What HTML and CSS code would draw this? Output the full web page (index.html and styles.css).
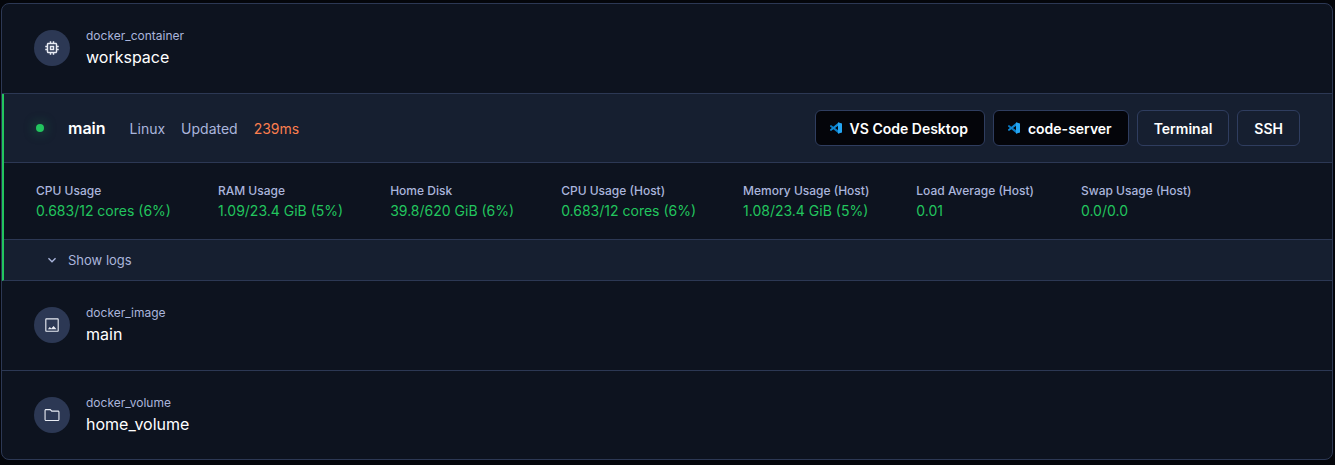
FILE: index.html
```html
<!DOCTYPE html>
<html lang="en">
<head>
<meta charset="UTF-8">
<meta name="viewport" content="width=device-width, initial-scale=1.0">
<title>Workspace resources</title>
<link rel="stylesheet" href="styles.css">
</head>
<body>
<main class="resources">
  <section class="resource">
    <div class="avatar">
      <svg width="18" height="18" viewBox="0 0 24 24" fill="currentColor"><path d="M15 9H9v6h6V9zm-2 4h-2v-2h2v2zm8-2V9h-2V7c0-1.100-.9-2-2-2h-2V3h-2v2h-2V3H9v2H7c-1.100 0-2 .9-2 2v2H3v2h2v2H3v2h2v2c0 1.100.9 2 2 2h2v2h2v-2h2v2h2v-2h2c1.100 0 2-.9 2-2v-2h2v-2h-2v-2h2zm-4 6H7V7h10v10z"/></svg>
    </div>
    <div>
      <div class="resource-type">docker_container</div>
      <div class="resource-name">workspace</div>
    </div>
  </section>

  <section class="agent">
    <header class="agent-header">
      <div class="agent-info">
        <span class="status"></span>
        <span class="agent-name">main</span>
        <span>Linux</span>
        <span>Updated</span>
        <span class="latency">239ms</span>
      </div>
      <div class="apps">
        <button class="app app-dark" type="button">
          <svg class="vscode" viewBox="0 0 24 24"><path fill="#0b7bc4" d="M0 7.500 2 6l15 11v6L0 9z"/><path fill="#1088d4" d="M0 16.500 2 18 17 7V1L0 15z"/><path fill="#24a5f2" d="M16 .5 24 3v18l-8 2.500z"/></svg>
          VS Code Desktop
        </button>
        <button class="app app-dark" type="button">
          <svg class="vscode" viewBox="0 0 24 24"><path fill="#0b7bc4" d="M0 7.500 2 6l15 11v6L0 9z"/><path fill="#1088d4" d="M0 16.500 2 18 17 7V1L0 15z"/><path fill="#24a5f2" d="M16 .5 24 3v18l-8 2.500z"/></svg>
          code-server
        </button>
        <button class="app" type="button">Terminal</button>
        <button class="app" type="button">SSH</button>
      </div>
    </header>

    <dl class="stats">
      <div><dt>CPU Usage</dt><dd>0.683/12 cores (6%)</dd></div>
      <div><dt>RAM Usage</dt><dd>1.09/23.4 GiB (5%)</dd></div>
      <div><dt>Home Disk</dt><dd>39.8/620 GiB (6%)</dd></div>
      <div><dt>CPU Usage (Host)</dt><dd>0.683/12 cores (6%)</dd></div>
      <div><dt>Memory Usage (Host)</dt><dd>1.08/23.4 GiB (5%)</dd></div>
      <div><dt>Load Average (Host)</dt><dd>0.01</dd></div>
      <div><dt>Swap Usage (Host)</dt><dd>0.0/0.0</dd></div>
    </dl>

    <button class="logs" type="button">
      <svg width="16" height="16" viewBox="0 0 24 24" fill="currentColor"><path d="M7.400 8.600 12 13.200l4.600-4.600L18 10l-6 6-6-6z"/></svg>
      Show logs
    </button>
  </section>

  <section class="resource">
    <div class="avatar">
      <svg width="18" height="18" viewBox="0 0 24 24" fill="currentColor"><path d="M19.500 4.500v15h-15v-15h15m0-1.500h-15C3.700 3 3 3.700 3 4.500v15c0 .8.700 1.500 1.500 1.500h15c.8 0 1.500-.7 1.500-1.500v-15c0-.8-.7-1.500-1.500-1.500zm-5.400 10.400-3 3.400L9 14.600 6.500 17.500h11.500l-3.900-4.100z"/></svg>
    </div>
    <div>
      <div class="resource-type">docker_image</div>
      <div class="resource-name">main</div>
    </div>
  </section>

  <section class="resource">
    <div class="avatar">
      <svg width="18" height="18" viewBox="0 0 24 24" fill="currentColor"><path d="m9.400 5.500 2 2h9.100v11h-17v-13h5.900M10 4H4c-1.100 0-2 .9-2 2v12c0 1.100.9 2 2 2h16c1.100 0 2-.9 2-2V8c0-1.100-.9-2-2-2h-8l-2-2z"/></svg>
    </div>
    <div>
      <div class="resource-type">docker_volume</div>
      <div class="resource-name">home_volume</div>
    </div>
  </section>
</main>
</body>
</html>
```

FILE: styles.css
```css
* {
  box-sizing: border-box;
}
body {
  margin: 0;
  padding: 3px 2px 5px 1px;
  background-color: #04060b;
  color: #fff;
  font-family: Inter, sans-serif;
  font-size: 14px;
}
button {
  font: inherit;
  cursor: pointer;
}
.resources {
  background-color: #0d131f;
  border: 1px solid #2c3854;
  border-radius: 8px;
  overflow: hidden;
}
.resource {
  display: flex;
  align-items: center;
  gap: 16px;
  padding: 23px 32px 24px;
  border-bottom: 1px solid #2c3854;
}
.resource:last-child {
  padding-bottom: 23px;
  border-bottom: none;
}
.avatar {
  display: flex;
  align-items: center;
  justify-content: center;
  width: 36px;
  height: 36px;
  border-radius: 50%;
  background-color: #2c3854;
  color: #e8ebf3;
}
.resource-type {
  color: #aab5dc;
  font-size: 12px;
  line-height: 18px;
}
.resource-name {
  font-size: 16px;
  line-height: 24px;
}

/* Agent */
.agent {
  border-left: 2px solid #22c55e;
  border-bottom: 1px solid #2c3854;
}
.agent-header {
  display: flex;
  align-items: center;
  justify-content: space-between;
  padding: 16px 32px;
  background-color: #161f30;
  border-bottom: 1px solid #2c3854;
}
.agent-info {
  display: flex;
  align-items: center;
  gap: 16px;
  color: #aab5dc;
}
.status {
  width: 8px;
  height: 8px;
  margin-right: 8px;
  border-radius: 50%;
  background-color: #22c55e;
  box-shadow: 0 0 12px #22c55e80;
}
.agent-name {
  margin-right: 8px;
  color: #fff;
  font-size: 16px;
  font-weight: 600;
}
.latency {
  color: #fb7e4e;
}
.apps {
  display: flex;
  gap: 8px;
}
.app {
  display: flex;
  align-items: center;
  gap: 8px;
  height: 36px;
  padding: 0 16px;
  background-color: transparent;
  border: 1px solid #2f3d5f;
  border-radius: 6px;
  color: #fff;
  font-weight: 600;
}
.app-dark {
  padding-left: 14px;
  background-color: #04050a;
}
.vscode {
  width: 12px;
  height: 12px;
}
.stats {
  display: flex;
  flex-wrap: wrap;
  gap: 16px 47px;
  margin: 0;
  padding: 18px 32px;
}
.stats dt {
  color: #aab5dc;
  font-size: 12px;
  font-weight: 500;
  line-height: 20px;
}
.stats dd {
  margin: 0;
  color: #22c55e;
  line-height: 20px;
}
.logs {
  display: flex;
  align-items: center;
  gap: 8px;
  width: 100%;
  height: 41px;
  padding: 0 40px;
  background-color: #161f30;
  border: none;
  border-top: 1px solid #2c3854;
  color: #aab5dc;
  font-size: 13px;
}
```
